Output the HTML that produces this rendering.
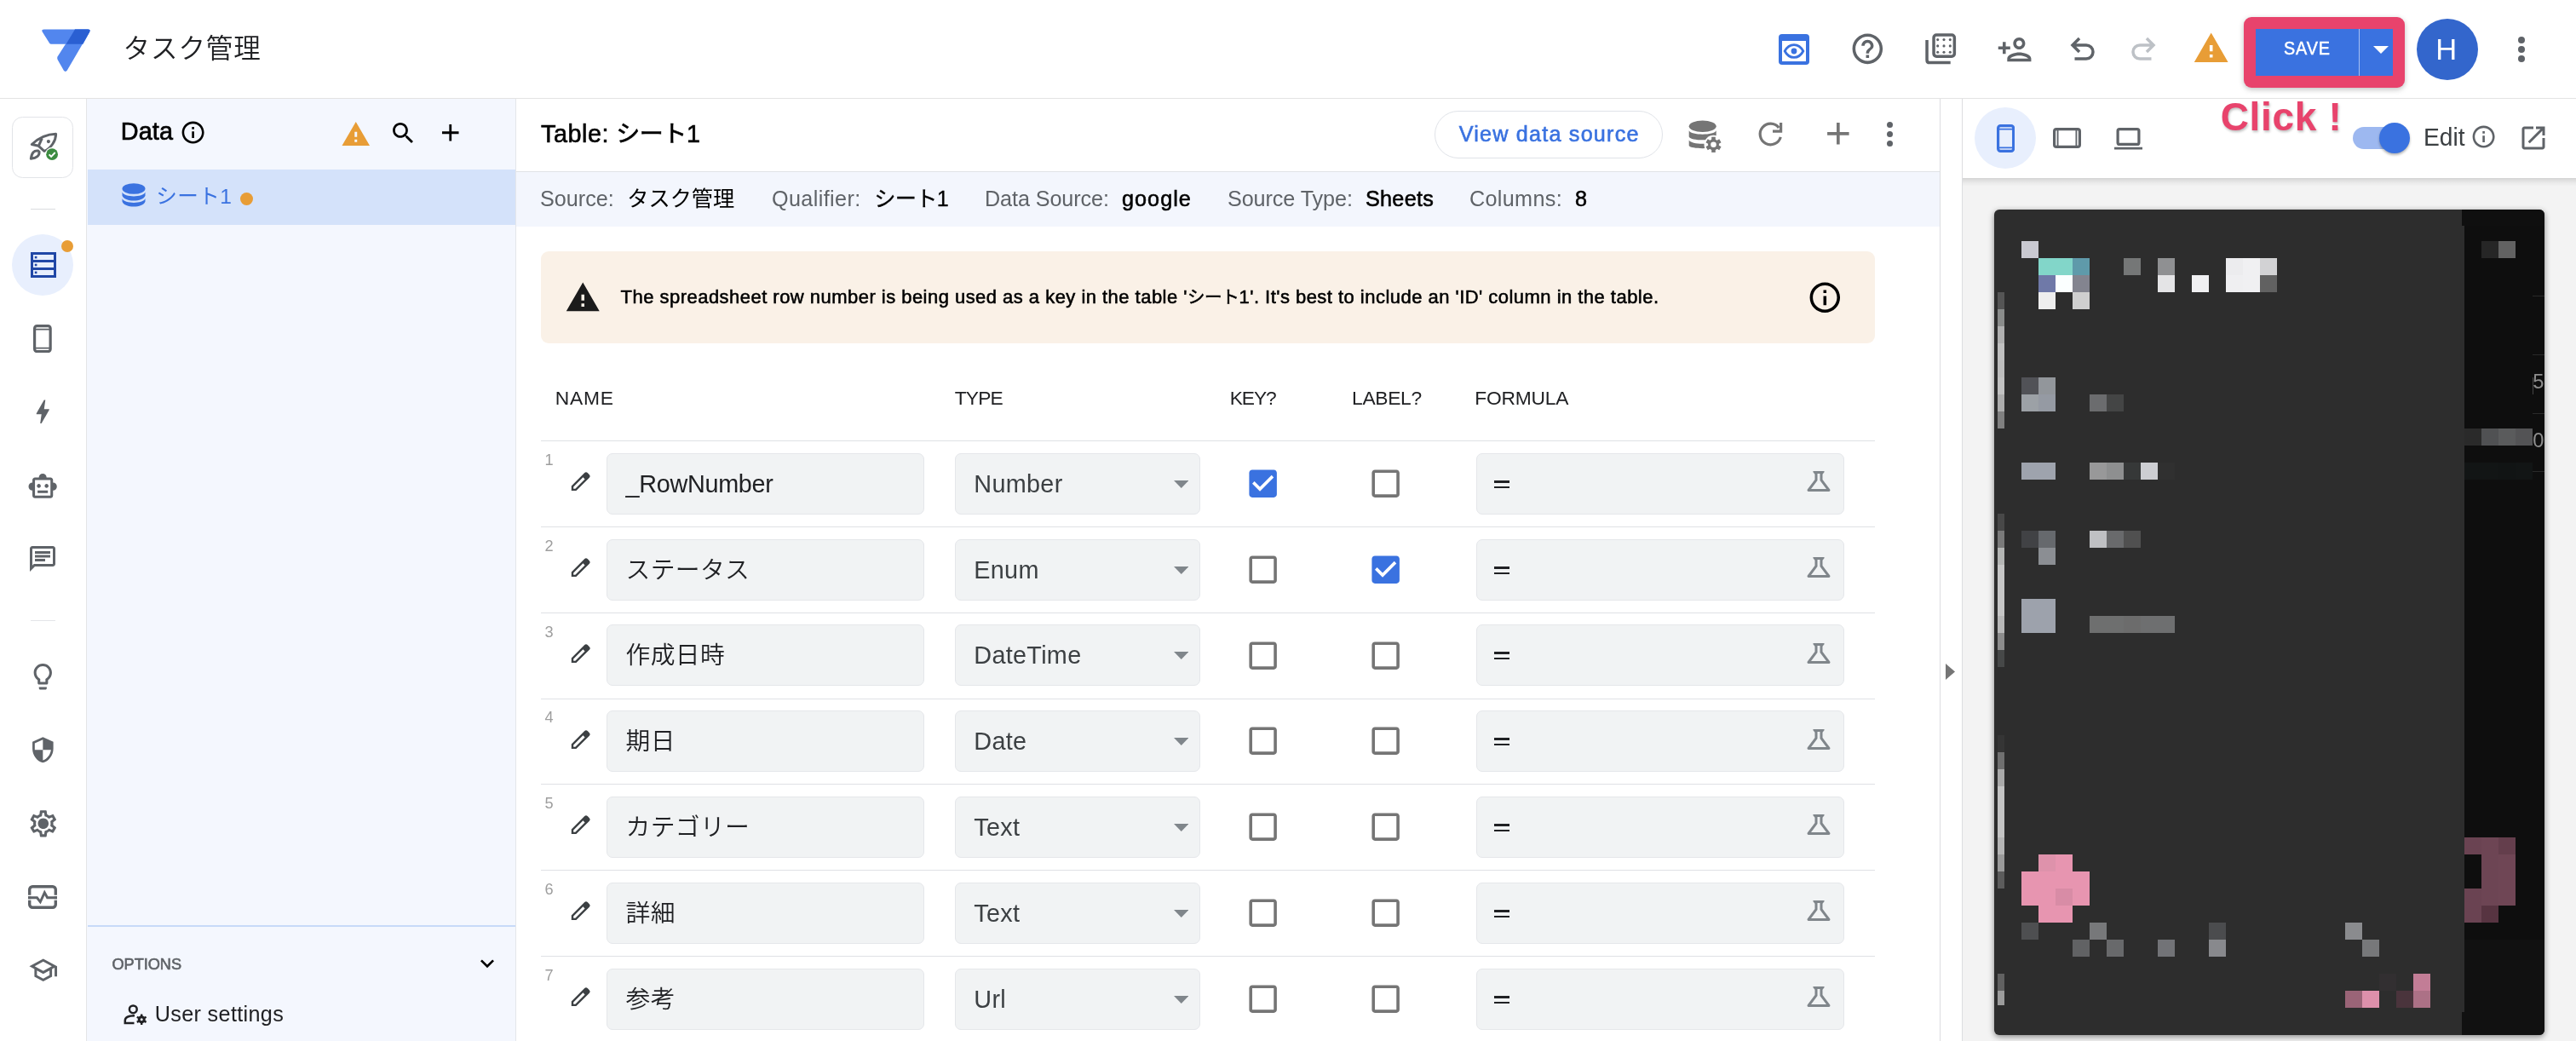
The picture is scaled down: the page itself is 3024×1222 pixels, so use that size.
<!DOCTYPE html>
<html lang="ja"><head><meta charset="utf-8"><title>タスク管理 - AppSheet</title>
<style>
html,body{margin:0;padding:0;}
body{width:3024px;height:1222px;overflow:hidden;position:relative;background:#fff;
 font-family:"Liberation Sans","Noto Sans CJK JP",sans-serif;}
#app{position:absolute;left:0;top:0;width:3024px;height:1222px;overflow:hidden;will-change:transform;}
#app>div,#app>svg,#app>span{position:absolute;box-sizing:border-box;}
.t{white-space:nowrap;display:block;}
</style></head>
<body><div id="app">
<div style="left:0px;top:0px;width:3024px;height:115px;background:#fff;"></div>
<div style="left:0px;top:115px;width:3024px;height:1px;background:#e3e3e3;"></div>
<div style="left:0px;top:116px;width:101px;height:1106px;background:#fff;"></div>
<div style="left:101px;top:116px;width:1px;height:1106px;background:#e4e5e7;"></div>
<div style="left:102px;top:116px;width:503px;height:1106px;background:#f4f7fe;"></div>
<div style="left:605px;top:116px;width:1px;height:1106px;background:#e4e6ea;"></div>
<div style="left:606px;top:116px;width:1671px;height:1106px;background:#fff;"></div>
<div style="left:2277px;top:116px;width:1px;height:1106px;background:#dcdde0;"></div>
<div style="left:2278px;top:116px;width:25px;height:1106px;background:#fff;"></div>
<div style="left:2303px;top:116px;width:1px;height:1106px;background:#dcdde0;"></div>
<div style="left:2304px;top:116px;width:720px;height:1106px;background:#f3f3f3;"></div>
<svg style="left:40px;top:26px;" width="76" height="66" viewBox="0 0 76 66"><path fill="#5286ee" d="M12 8.500 H63 Q66.800 8.500 65 11.800 L57.500 25.800 H20.300 Q18.600 25.800 17.800 24.300 L9.800 11.500 Q8 8.500 12 8.500Z"/><path fill="#5286ee" d="M48 8.500 H63 Q66.800 8.500 65 11.800 L39 56.300 Q36.800 59.500 34.600 56.300 L27.600 44 Q26.600 42 27.700 40.200Z"/><path fill="#2a5fd2" d="M48 8.500 H63 Q66.800 8.500 65 11.800 L57 25.800 H37.600Z"/></svg>
<span id="title" class="t" style="left:144.4px;top:42.45px;font-size:31.6px;line-height:31.6px;color:#202124;letter-spacing:0.9px;font-weight:350;">タスク管理</span>
<svg style="left:2088px;top:40px;" width="36" height="36" viewBox="0 0 36 36"><rect x="0" y="0" width="36" height="36" rx="4" fill="#3a72e0"/><rect x="4" y="8" width="28" height="24" fill="#fff"/><path d="M7.2 20 C10.2 14.2 14 12.6 18 12.6 S25.8 14.2 28.800 20 C25.800 25.800 22 27.400 18 27.400 S10.200 25.800 7.200 20Z" fill="none" stroke="#3a72e0" stroke-width="2.8"/><circle cx="18" cy="20" r="3.4" fill="#3a72e0"/></svg>
<svg style="left:2171.4px;top:35.9px;" width="42.7" height="42.7" viewBox="0 0 24 24"><path fill="#5f6368" d="M11 18h2v-2h-2v2zm1-16C6.48 2 2 6.48 2 12s4.48 10 10 10 10-4.48 10-10S17.52 2 12 2zm0 18c-4.41 0-8-3.59-8-8s3.59-8 8-8 8 3.59 8 8-3.59 8-8 8zm0-14c-2.21 0-4 1.79-4 4h2c0-1.1.9-2 2-2s2 .9 2 2c0 2-3 1.75-3 5h2c0-2.25 3-2.5 3-5 0-2.21-1.79-4-4-4z"/></svg>
<svg style="left:2258px;top:37px;" width="40" height="40" viewBox="0 0 40 40"><rect x="12.050" y="3.950" width="24.300" height="25.300" rx="3.200" fill="none" stroke="#5f6368" stroke-width="3.500"/><path d="M4.050 9.900 V33.400 Q4.050 36.600 7.250 36.600 H31.700" fill="none" stroke="#5f6368" stroke-width="3.500"/><circle cx="16.70" cy="9.60" r="1.550" fill="#5f6368"/><circle cx="16.70" cy="16.90" r="1.550" fill="#5f6368"/><circle cx="16.70" cy="24.20" r="1.550" fill="#5f6368"/><circle cx="24.00" cy="9.60" r="1.550" fill="#5f6368"/><circle cx="24.00" cy="16.90" r="1.550" fill="#5f6368"/><circle cx="24.00" cy="24.20" r="1.550" fill="#5f6368"/><circle cx="31.30" cy="9.60" r="1.550" fill="#5f6368"/><circle cx="31.30" cy="16.90" r="1.550" fill="#5f6368"/><circle cx="31.30" cy="24.20" r="1.550" fill="#5f6368"/></svg>
<svg style="left:2343.7px;top:36.5px;" width="42.2" height="42.2" viewBox="0 0 24 24"><path fill="#5f6368" d="M15 12c2.21 0 4-1.79 4-4s-1.79-4-4-4-4 1.79-4 4 1.79 4 4 4zm0-6c1.1 0 2 .9 2 2s-.9 2-2 2-2-.9-2-2 .9-2 2-2zm0 8c-2.67 0-8 1.34-8 4v2h16v-2c0-2.66-5.33-4-8-4zm-6 4c.22-.72 3.31-2 6-2 2.7 0 5.8 1.29 6 2H9zm-3-3v-3h3v-2H6V7H4v3H1v2h3v3z"/></svg>
<svg style="left:2429px;top:42.5px;" width="32" height="30" viewBox="0 0 32 30"><path d="M12 2 L4 10 L12 18 M4 10 H20 A8 8 0 0 1 20 26 H6.500" fill="none" stroke="#5f6368" stroke-width="3.500" stroke-linejoin="miter"/></svg>
<svg style="left:2499.75px;top:42.5px;" width="32" height="30" viewBox="0 0 32 30"><g transform="translate(32 0) scale(-1 1)"><path d="M12 2 L4 10 L12 18 M4 10 H20 A8 8 0 0 1 20 26 H6.500" fill="none" stroke="#bdc1c6" stroke-width="3.500"/></g></svg>
<svg style="left:2573.9px;top:35.4px;" width="43.4" height="43.4" viewBox="0 0 24 24"><path fill="#e89d36" d="M1 21h22L12 2 1 21zm12-3h-2v-2h2v2zm0-4h-2v-4h2v4z"/></svg>
<div style="left:2634px;top:20px;width:189px;height:83px;background:#e8436c;border-radius:9px;box-shadow:0 2px 6px rgba(0,0,0,.25);"></div>
<div style="left:2648px;top:34px;width:161px;height:55px;background:#3a72e0;"></div>
<div style="left:2769px;top:34px;width:1px;height:55px;background:rgba(255,255,255,.55);"></div>
<span id="save" class="t" style="left:2680.6px;top:46.47px;font-size:22.6px;line-height:22.6px;color:#fff;letter-spacing:1.0px;-webkit-text-stroke:0.5px #fff;transform:scaleX(0.876);transform-origin:0 0;">SAVE</span>
<svg style="left:2785.5px;top:53.5px;" width="18" height="9" viewBox="0 0 18 9"><path d="M0 0H18L9 9Z" fill="#fff"/></svg>
<div style="left:2837px;top:22px;width:72px;height:72px;background:#3366cc;border-radius:50%;"></div>
<span id="avatar" class="t" style="left:2859.3px;top:40.50px;font-size:34.5px;line-height:34.5px;color:#fff;">H</span>
<div style="left:2955.5px;top:43px;width:8px;height:8px;background:#5f6368;border-radius:50%;"></div>
<div style="left:2955.5px;top:54px;width:8px;height:8px;background:#5f6368;border-radius:50%;"></div>
<div style="left:2955.5px;top:65px;width:8px;height:8px;background:#5f6368;border-radius:50%;"></div>
<span id="click" class="t" style="left:2606.7px;top:113.56px;font-size:46px;line-height:46px;color:#e8436c;letter-spacing:0.7px;font-weight:700;text-shadow:1px 2px 3px rgba(0,0,0,.25);z-index:5;">Click !</span>
<div style="left:14px;top:137px;width:72px;height:72px;background:#fff;border:1px solid #e2e4e8;border-radius:12.500px;"></div>
<svg style="left:30px;top:150px;" width="44" height="42" viewBox="0 0 44 42"><path d="M35.600 7.300 C27 7.500 17 10.500 7.300 19.500 L15.300 21.300 L22 27.500 C30.500 23.500 35.600 15 35.600 7.300Z M19.300 12.300 L15.300 21.300" fill="none" stroke="#5f6368" stroke-width="3" stroke-linejoin="round"/><circle cx="26.900" cy="16.100" r="2.100" fill="#5f6368"/><path d="M14.800 27 C10 26.200 7.200 29.500 6.300 36.300 C13 35.500 16.600 32.800 16 28" fill="none" stroke="#5f6368" stroke-width="3" stroke-linejoin="round" stroke-linecap="round"/><circle cx="31.100" cy="31.200" r="8.200" fill="#fff"/><circle cx="31.100" cy="31.200" r="6.900" fill="#3c8c40"/><path d="M27.600 31.400 L30.100 33.800 L34.700 29" fill="none" stroke="#fff" stroke-width="1.900"/></svg>
<div style="left:36px;top:245px;width:29px;height:1px;background:#dadce0;"></div>
<div style="left:36px;top:728px;width:29px;height:1px;background:#e3e5e8;"></div>
<div style="left:14px;top:275px;width:72px;height:72px;background:#e8effd;border-radius:50%;"></div>
<svg style="left:36px;top:296px;" width="30" height="30" viewBox="0 0 30 30"><rect x="1.500" y="1.500" width="27" height="27" fill="none" stroke="#2047a6" stroke-width="3"/><path d="M1.500 10.500H28.500M1.500 19.500H28.500" stroke="#2047a6" stroke-width="3"/><rect x="4.800" y="4.800" width="2.600" height="2.600" fill="#2047a6"/><rect x="4.800" y="13.700" width="2.600" height="2.600" fill="#2047a6"/><rect x="4.800" y="22.600" width="2.600" height="2.600" fill="#2047a6"/></svg>
<div style="left:72px;top:282px;width:14px;height:14px;background:#e89d36;border-radius:50%;"></div>
<svg style="left:39px;top:380.5px;" width="21.75" height="33.25" viewBox="0 0 21.75 33.25"><rect x="1.600" y="1.600" width="18.55" height="30.05" rx="2.800" fill="none" stroke="#5f6368" stroke-width="3.200"/><path d="M2 5.700H19.75M2 27.55H19.75" stroke="#5f6368" stroke-width="1.800"/></svg>
<svg style="left:31.86px;top:464.7px;" width="36.5" height="36.5" viewBox="0 0 24 24"><path fill="#5f6368" d="M11 21h-1l1-7H7.5c-.58 0-.57-.32-.38-.66.19-.34.05-.08.07-.12C8.48 10.94 10.42 7.54 13 3h1l-1 7h3.5c.49 0 .56.33.47.51l-.07.15C12.96 17.55 11 21 11 21z"/></svg>
<svg style="left:32.3px;top:552.6px;" width="36.3" height="36.3" viewBox="0 0 24 24"><path fill="#5f6368" d="M20 9V7c0-1.100-.9-2-2-2h-3c0-1.660-1.340-3-3-3S9 3.340 9 5H6c-1.100 0-2 .9-2 2v2c-1.660 0-3 1.340-3 3s1.340 3 3 3v4c0 1.100.9 2 2 2h12c1.100 0 2-.9 2-2v-4c1.660 0 3-1.340 3-3s-1.340-3-3-3zm-2 10H6V7h12v12zm-9-6c-.83 0-1.500-.67-1.500-1.500S8.170 10 9 10s1.500.67 1.500 1.500S9.830 13 9 13zm7.500-1.500c0 .83-.67 1.500-1.500 1.500s-1.500-.67-1.500-1.500.67-1.500 1.500-1.500 1.500.67 1.500 1.500zM8 15h8v2H8v-2z"/></svg>
<svg style="left:32px;top:637.7px;" width="36" height="36" viewBox="0 0 24 24"><path fill="#5f6368" d="M4 4h16v12H5.170L4 17.170V4m0-2c-1.100 0-1.990.9-1.990 2L2 22l4-4h14c1.100 0 2-.9 2-2V4c0-1.100-.9-2-2-2H4zm2 10h8v2H6v-2zm0-3h12v2H6V9zm0-3h12v2H6V6z"/></svg>
<svg style="left:32.4px;top:775.7px;" width="36.6" height="36.6" viewBox="0 0 24 24"><path fill="#5f6368" d="M9 21c0 .55.45 1 1 1h4c.55 0 1-.45 1-1v-1H9v1zm3-19C8.140 2 5 5.140 5 9c0 2.380 1.190 4.470 3 5.740V17c0 .55.45 1 1 1h6c.55 0 1-.45 1-1v-2.260c1.810-1.270 3-3.360 3-5.740 0-3.860-3.140-7-7-7zm2.850 11.100l-.85.6V16h-4v-2.300l-.85-.6C7.800 12.160 7 10.630 7 9c0-2.760 2.240-5 5-5s5 2.240 5 5c0 1.630-.8 3.160-2.150 4.100z"/></svg>
<svg style="left:34.03px;top:863.6px;" width="32.7" height="32.7" viewBox="0 0 24 24"><path fill="#5f6368" d="M12 1L3 5v6c0 5.550 3.840 10.740 9 12 5.160-1.260 9-6.450 9-12V5l-9-4zm0 10.990h7c-.53 4.120-3.280 7.790-7 8.940V12H5V6.300l7-3.110v8.800z"/></svg>
<svg style="left:31.8px;top:948.1px;" width="37.6" height="37.6" viewBox="0 0 24 24"><path fill="#5f6368" d="M19.430 12.980c.04-.32.070-.64.070-.98 0-.34-.03-.66-.07-.98l2.110-1.650c.19-.15.24-.42.12-.64l-2-3.460c-.09-.16-.26-.25-.44-.25-.06 0-.12.010-.17.030l-2.490 1c-.52-.4-1.080-.73-1.690-.98l-.38-2.650C14.460 2.180 14.250 2 14 2h-4c-.25 0-.46.180-.49.420l-.38 2.650c-.61.25-1.170.59-1.690.98l-2.490-1c-.06-.02-.12-.03-.18-.03-.17 0-.34.090-.43.250l-2 3.460c-.13.220-.07.490.12.640l2.110 1.650c-.04.320-.07.650-.07.980 0 .33.030.66.070.98l-2.110 1.650c-.19.150-.24.420-.12.640l2 3.460c.09.160.26.250.44.250.06 0 .12-.010.17-.03l2.490-1c.52.4 1.080.73 1.690.98l.38 2.650c.03.240.24.420.49.420h4c.25 0 .46-.18.490-.42l.38-2.650c.61-.25 1.170-.59 1.690-.98l2.490 1c.06.020.12.030.18.030.17 0 .34-.09.43-.25l2-3.460c.12-.22.070-.49-.12-.64l-2.110-1.650zm-1.980-1.710c.04.310.05.520.05.730 0 .21-.02.430-.05.730l-.14 1.130.89.7 1.080.84-.7 1.210-1.270-.51-1.040-.42-.9.68c-.43.320-.84.560-1.250.73l-1.060.43-.16 1.130-.2 1.350h-1.400l-.19-1.350-.16-1.130-1.060-.43c-.43-.18-.83-.41-1.230-.71l-.91-.7-1.060.43-1.270.51-.7-1.210 1.080-.84.89-.7-.14-1.130c-.03-.31-.05-.54-.05-.74s.02-.43.050-.73l.14-1.130-.89-.7-1.080-.84.7-1.210 1.270.51 1.040.42.9-.68c.43-.32.840-.56 1.250-.73l1.060-.43.16-1.130.2-1.350h1.390l.19 1.350.16 1.130 1.060.43c.43.18.83.41 1.230.71l.91.7 1.060-.43 1.270-.51.7 1.210-1.070.85-.89.7.14 1.130zM12 8c-2.210 0-4 1.790-4 4s1.790 4 4 4 4-1.790 4-4-1.790-4-4-4z"/></svg>
<svg style="left:32px;top:1038px;" width="36" height="30" viewBox="0 0 36 30"><rect x="2.700" y="2.700" width="30.600" height="24.600" rx="3.500" fill="none" stroke="#5f6368" stroke-width="3.400"/><path d="M0.500 13.600H5M0.500 18H5M31 13.600H35.500M31 18H35.500" stroke="#fff" stroke-width="1.500"/><path d="M1 15.800 H11.500 L15.300 20.800 L20.300 9.800 L23.600 15.800 H35" fill="none" stroke="#5f6368" stroke-width="2.900"/></svg>
<svg style="left:32.7px;top:1120.6px;" width="35.5" height="35.5" viewBox="0 0 24 24"><path fill="#5f6368" d="M12 3L1 9l4 2.180v6L12 21l7-3.820v-6l2-1.090V17h2V9L12 3zm6.820 6L12 12.720 5.180 9 12 5.280 18.820 9zM17 15.990l-5 2.730-5-2.730v-3.720L12 15l5-2.730v3.720z"/></svg>
<span id="data" class="t" style="left:141.7px;top:139.52px;font-size:28.8px;line-height:28.8px;color:#000;letter-spacing:0.15px;-webkit-text-stroke:0.7px #000;">Data</span>
<svg style="left:210.9px;top:139.7px;" width="31.2" height="31.2" viewBox="0 0 24 24"><path fill="#000" d="M11 7h2v2h-2zm0 4h2v6h-2zm1-9C6.48 2 2 6.48 2 12s4.48 10 10 10 10-4.48 10-10S17.52 2 12 2zm0 18c-4.41 0-8-3.59-8-8s3.59-8 8-8 8 3.59 8 8-3.59 8-8 8z"/></svg>
<svg style="left:400px;top:140.1px;" width="35.5" height="35.5" viewBox="0 0 24 24"><path fill="#e89d36" d="M1 21h22L12 2 1 21zm12-3h-2v-2h2v2zm0-4h-2v-4h2v4z"/></svg>
<svg style="left:456.9px;top:140.2px;" width="32.8" height="32.8" viewBox="0 0 24 24"><path fill="#000" d="M15.5 14h-.79l-.28-.27C15.41 12.59 16 11.11 16 9.5 16 5.91 13.09 3 9.5 3S3 5.91 3 9.5 5.91 16 9.5 16c1.61 0 3.09-.59 4.23-1.57l.27.28v.79l5 4.99L20.49 19l-4.99-5zm-6 0C7.01 14 5 11.99 5 9.5S7.01 5 9.5 5 14 7.01 14 9.5 11.99 14 9.5 14z"/></svg>
<svg style="left:512.1px;top:139.4px;" width="33.5" height="33.5" viewBox="0 0 24 24"><path fill="#000" d="M19 13h-6v6h-2v-6H5v-2h6V5h2v6h6v2z"/></svg>
<div style="left:103px;top:199px;width:502px;height:65px;background:#d4e2fa;"></div>
<svg style="left:143px;top:215px;" width="28" height="28" viewBox="0 0 28 28"><ellipse cx="14" cy="6.500" rx="13.500" ry="6.300" fill="#3a72e0"/><path d="M0.500 10.500 C3 17 25 17 27.500 10.500 V14.800 C25 22.500 3 22.500 0.500 14.800Z" fill="#3a72e0"/><path d="M0.500 18 C3 24.500 25 24.500 27.500 18 V21.500 C25 29.500 3 29.500 0.500 21.500Z" fill="#3a72e0"/></svg>
<span id="sheet1" class="t" style="left:183.3px;top:218.98px;font-size:24.6px;line-height:24.6px;color:#3a72e0;letter-spacing:0.4px;">シート1</span>
<div style="left:281.5px;top:225.5px;width:15.5px;height:15.5px;background:#e89d36;border-radius:50%;"></div>
<div style="left:103px;top:1086px;width:502px;height:2px;background:#c7daf8;"></div>
<span id="options" class="t" style="left:131.5px;top:1123.19px;font-size:18.2px;line-height:18.2px;color:#5f6368;letter-spacing:-0.05px;-webkit-text-stroke:0.6px #5f6368;">OPTIONS</span>
<svg style="left:556.3px;top:1115.35px;" width="32" height="32" viewBox="0 0 24 24"><path fill="#000" d="M16.59 8.59L12 13.17 7.41 8.59 6 10l6 6 6-6z"/></svg>
<svg style="left:145px;top:1178px;" width="29" height="25" viewBox="0 0 29 25"><circle cx="11.300" cy="6.800" r="4.400" fill="none" stroke="#202124" stroke-width="2.500"/><path d="M13 14.200 C6 14.200 1.800 16.500 1.800 20 V23 H12.500" fill="none" stroke="#202124" stroke-width="2.500"/><circle cx="21.200" cy="18.800" r="3.200" fill="none" stroke="#202124" stroke-width="2.600"/><path d="M21.200 12.600V25M15.800 15.700L26.600 21.900M15.800 21.900L26.600 15.700" stroke="#202124" stroke-width="2.400"/><circle cx="21.200" cy="18.800" r="1.500" fill="#f4f7fe"/></svg>
<span id="usersettings" class="t" style="left:181.8px;top:1177.67px;font-size:25.2px;line-height:25.2px;color:#202124;letter-spacing:0.33px;">User settings</span>
<span id="tabletitle" class="t" style="left:635px;top:142.62px;font-size:28.8px;line-height:28.8px;color:#000;-webkit-text-stroke:0.6px #000;"><span style="letter-spacing:.55px">Table:</span> <span style="font-size:28px;letter-spacing:-.4px">シート</span>1</span>
<div style="left:1684px;top:130px;width:268px;height:56px;background:#fff;border:1px solid #e0e3e8;border-radius:28px;"></div>
<span id="viewds" class="t" style="left:1712.7px;top:144.92px;font-size:25.2px;line-height:25.2px;color:#3a72e0;letter-spacing:1.2px;-webkit-text-stroke:0.6px #3a72e0;">View data source</span>
<svg style="left:1980px;top:140px;" width="44" height="42" viewBox="0 0 44 42"><ellipse cx="18.700" cy="8.200" rx="16" ry="6.700" fill="#757575"/><path d="M2.700 13.200 C5 19.100 32.400 19.100 34.700 13.200 V20.400 C32.400 25.600 5 25.600 2.700 20.400Z" fill="#757575"/><path d="M2.700 24.500 C5 30.200 32.400 30.200 34.700 24.500 V31 C32.400 35.200 5 35.200 2.700 31Z" fill="#757575"/><g transform="translate(31.500 29.800)"><circle r="11" fill="#fff"/><circle r="6.500" fill="#757575"/><rect x="-2.300" y="-9.100" width="4.600" height="5" fill="#757575" transform="rotate(0)"/><rect x="-2.300" y="-9.100" width="4.600" height="5" fill="#757575" transform="rotate(60)"/><rect x="-2.300" y="-9.100" width="4.600" height="5" fill="#757575" transform="rotate(120)"/><rect x="-2.300" y="-9.100" width="4.600" height="5" fill="#757575" transform="rotate(180)"/><rect x="-2.300" y="-9.100" width="4.600" height="5" fill="#757575" transform="rotate(240)"/><rect x="-2.300" y="-9.100" width="4.600" height="5" fill="#757575" transform="rotate(300)"/><circle r="3.300" fill="#fff"/></g></svg>
<svg style="left:2060px;top:140px;" width="36" height="36" viewBox="0 0 36 36"><path d="M28.200 9.900 A12.300 12.300 0 1 0 30.300 20.900" fill="none" stroke="#757575" stroke-width="3.200"/><path d="M30.600 3.900 V14.100 H21" fill="none" stroke="#757575" stroke-width="3.200"/></svg>
<svg style="left:2135.8px;top:135.4px;" width="43.7" height="43.7" viewBox="0 0 24 24"><path fill="#757575" d="M19 13h-6v6h-2v-6H5v-2h6V5h2v6h6v2z"/></svg>
<div style="left:2214.9px;top:143.20000000000002px;width:7.2px;height:7.2px;background:#5f6368;border-radius:50%;"></div>
<div style="left:2214.9px;top:153.9px;width:7.2px;height:7.2px;background:#5f6368;border-radius:50%;"></div>
<div style="left:2214.9px;top:164.70000000000002px;width:7.2px;height:7.2px;background:#5f6368;border-radius:50%;"></div>
<div style="left:606px;top:201px;width:1671px;height:1px;background:#e0e2e6;"></div>
<div style="left:606px;top:202px;width:1671px;height:63.5px;background:#f3f6fd;"></div>
<span id="i_src_l" class="t" style="left:634px;top:220.28px;font-size:26.6px;line-height:26.6px;color:#5f6368;transform:scaleX(0.947);transform-origin:0 0;">Source:</span>
<span id="i_src_v" class="t" style="left:736.3px;top:220.67px;font-size:25.2px;line-height:25.2px;color:#000;">タスク管理</span>
<span id="i_q_l" class="t" style="left:906px;top:220.28px;font-size:26.6px;line-height:26.6px;color:#5f6368;letter-spacing:0.4px;transform:scaleX(0.947);transform-origin:0 0;">Qualifier:</span>
<span id="i_q_v" class="t" style="left:1026.2px;top:220.67px;font-size:25.2px;line-height:25.2px;color:#000;letter-spacing:-0.7px;-webkit-text-stroke:0.3px #000;">シート1</span>
<span id="i_ds_l" class="t" style="left:1156px;top:220.28px;font-size:26.6px;line-height:26.6px;color:#5f6368;letter-spacing:-0.1px;transform:scaleX(0.947);transform-origin:0 0;">Data Source:</span>
<span id="i_ds_v" class="t" style="left:1316.7px;top:220.28px;font-size:26.6px;line-height:26.6px;color:#000;letter-spacing:1.1px;-webkit-text-stroke:0.6px #000;transform:scaleX(0.947);transform-origin:0 0;">google</span>
<span id="i_st_l" class="t" style="left:1441px;top:220.28px;font-size:26.6px;line-height:26.6px;color:#5f6368;letter-spacing:-0.1px;transform:scaleX(0.947);transform-origin:0 0;">Source Type:</span>
<span id="i_st_v" class="t" style="left:1603px;top:220.28px;font-size:26.6px;line-height:26.6px;color:#000;letter-spacing:0.3px;-webkit-text-stroke:0.6px #000;transform:scaleX(0.947);transform-origin:0 0;">Sheets</span>
<span id="i_c_l" class="t" style="left:1725px;top:220.28px;font-size:26.6px;line-height:26.6px;color:#5f6368;letter-spacing:0.35px;transform:scaleX(0.947);transform-origin:0 0;">Columns:</span>
<span id="i_c_v" class="t" style="left:1848.5px;top:220.28px;font-size:26.6px;line-height:26.6px;color:#000;-webkit-text-stroke:0.6px #000;transform:scaleX(0.947);transform-origin:0 0;">8</span>
<div style="left:635px;top:295px;width:1566px;height:108px;background:#faf1e7;border-radius:9px;"></div>
<svg style="left:663.2px;top:328.2px;" width="42.5" height="42.5" viewBox="0 0 24 24"><path fill="#1b1b1b" d="M1 21h22L12 2 1 21zm12-3h-2v-2h2v2zm0-4h-2v-4h2v4z"/></svg>
<span id="warn" class="t" style="left:728.6px;top:338.38px;font-size:22px;line-height:22px;color:#000;letter-spacing:0.47px;-webkit-text-stroke:0.55px #000;">The spreadsheet row number is being used as a key in the table '<span style="font-size:20.500px;letter-spacing:-.3px">シート</span>1'. It's best to include an 'ID' column in the table.</span>
<svg style="left:2121.45px;top:328.15px;" width="42.6" height="42.6" viewBox="0 0 24 24"><path fill="#000" d="M11 7h2v2h-2zm0 4h2v6h-2zm1-9C6.48 2 2 6.48 2 12s4.48 10 10 10 10-4.48 10-10S17.52 2 12 2zm0 18c-4.41 0-8-3.59-8-8s3.59-8 8-8 8 3.59 8 8-3.59 8-8 8z"/></svg>
<span id="h_name" class="t" style="left:651.8px;top:455.70px;font-size:22.8px;line-height:22.8px;color:#202124;letter-spacing:0.8px;">NAME</span>
<span id="h_type" class="t" style="left:1120.7px;top:455.70px;font-size:22.8px;line-height:22.8px;color:#202124;letter-spacing:-0.8px;">TYPE</span>
<span id="h_key" class="t" style="left:1443.7px;top:455.70px;font-size:22.8px;line-height:22.8px;color:#202124;letter-spacing:-1.1px;">KEY?</span>
<span id="h_label" class="t" style="left:1587px;top:455.70px;font-size:22.8px;line-height:22.8px;color:#202124;letter-spacing:-0.3px;">LABEL?</span>
<span id="h_formula" class="t" style="left:1731.2px;top:455.70px;font-size:22.8px;line-height:22.8px;color:#202124;letter-spacing:-0.2px;">FORMULA</span>
<div style="left:635px;top:517px;width:1566px;height:1px;background:#dfe1e5;"></div>
<span id="n0" class="t" style="left:639.5px;top:530.99px;font-size:18.2px;line-height:18.2px;color:#9e9e9e;">1</span>
<svg style="left:670px;top:553.2px;" width="25" height="25" viewBox="0 0 25 25"><g transform="translate(0.800 23.100) rotate(-45)"><path fill-rule="evenodd" fill="#3c4043" d="M0 0 L4 -4 H25.800 Q28.300 -4 28.300 -1.500 V1.500 Q28.300 4 25.800 4 H4 Z M3.400 0 L4.900 1.500 H20.800 V-1.500 H4.900 Z"/></g></svg>
<div style="left:712px;top:532px;width:373px;height:72px;background:#f1f3f4;border:1px solid #e5e7ea;border-radius:7px;"></div>
<span id="name0" class="t" style="left:734.5px;top:553.82px;font-size:28.8px;line-height:28.8px;color:#202124;letter-spacing:-0.3px;">_RowNumber</span>
<div style="left:1121px;top:532px;width:288px;height:72px;background:#f1f3f4;border:1px solid #e5e7ea;border-radius:7px;"></div>
<span id="type0" class="t" style="left:1143.3px;top:553.82px;font-size:28.8px;line-height:28.8px;color:#3c4043;letter-spacing:0.3px;">Number</span>
<svg style="left:1377.75px;top:563.8000000000001px;" width="17.5" height="9" viewBox="0 0 17.500 9"><path d="M0 0H17.500L8.750 9Z" fill="#80868b"/></svg>
<svg style="left:1461.1px;top:546.0px;" width="43.3" height="43.3" viewBox="0 0 24 24"><path fill="#3a72e0" d="M19 3H5c-1.11 0-2 .9-2 2v14c0 1.1.89 2 2 2h14c1.11 0 2-.9 2-2V5c0-1.1-.89-2-2-2zm-9 14l-5-5 1.41-1.41L10 14.17l7.59-7.59L19 8l-9 9z"/></svg>
<svg style="left:1604.85px;top:546.0px;" width="43.3" height="43.3" viewBox="0 0 24 24"><path fill="#757575" d="M19 5v14H5V5h14m0-2H5c-1.1 0-2 .9-2 2v14c0 1.1.9 2 2 2h14c1.1 0 2-.9 2-2V5c0-1.1-.9-2-2-2z"/></svg>
<div style="left:1733px;top:532px;width:432px;height:72px;background:#f1f3f4;border:1px solid #e5e7ea;border-radius:7px;"></div>
<div style="left:1754px;top:564px;width:17.5px;height:2.7px;background:#202124;"></div>
<div style="left:1754px;top:570.6px;width:17.5px;height:2.7px;background:#202124;"></div>
<svg style="left:2117.25px;top:547.2px;" width="36" height="36" viewBox="0 0 24 24"><path fill="#80868b" d="M13 11.330L18 18H6l5-6.670V6h2m2.960-2H8.040c-.42 0-.65.48-.39.81L9 6.500v4.170L3.200 18.400c-.49.66-.02 1.600.8 1.600h16c.82 0 1.290-.94.8-1.600L15 10.670V6.500l1.350-1.690c.26-.33.030-.81-.39-.81z"/></svg>
<div style="left:635px;top:618px;width:1566px;height:1px;background:#dfe1e5;"></div>
<span id="n1" class="t" style="left:639.5px;top:631.79px;font-size:18.2px;line-height:18.2px;color:#9e9e9e;">2</span>
<svg style="left:670px;top:654.0px;" width="25" height="25" viewBox="0 0 25 25"><g transform="translate(0.800 23.100) rotate(-45)"><path fill-rule="evenodd" fill="#3c4043" d="M0 0 L4 -4 H25.800 Q28.300 -4 28.300 -1.500 V1.500 Q28.300 4 25.800 4 H4 Z M3.400 0 L4.900 1.500 H20.800 V-1.500 H4.900 Z"/></g></svg>
<div style="left:712px;top:633px;width:373px;height:72px;background:#f1f3f4;border:1px solid #e5e7ea;border-radius:7px;"></div>
<span id="name1" class="t" style="left:734.5px;top:654.62px;font-size:28.8px;line-height:28.8px;color:#202124;letter-spacing:0.35px;font-weight:350;">ステータス</span>
<div style="left:1121px;top:633px;width:288px;height:72px;background:#f1f3f4;border:1px solid #e5e7ea;border-radius:7px;"></div>
<span id="type1" class="t" style="left:1143.3px;top:654.62px;font-size:28.8px;line-height:28.8px;color:#3c4043;letter-spacing:0.3px;">Enum</span>
<svg style="left:1377.75px;top:664.6px;" width="17.5" height="9" viewBox="0 0 17.500 9"><path d="M0 0H17.500L8.750 9Z" fill="#80868b"/></svg>
<svg style="left:1461.1px;top:646.8px;" width="43.3" height="43.3" viewBox="0 0 24 24"><path fill="#757575" d="M19 5v14H5V5h14m0-2H5c-1.1 0-2 .9-2 2v14c0 1.1.9 2 2 2h14c1.1 0 2-.9 2-2V5c0-1.1-.9-2-2-2z"/></svg>
<svg style="left:1604.85px;top:646.8px;" width="43.3" height="43.3" viewBox="0 0 24 24"><path fill="#3a72e0" d="M19 3H5c-1.11 0-2 .9-2 2v14c0 1.1.89 2 2 2h14c1.11 0 2-.9 2-2V5c0-1.1-.89-2-2-2zm-9 14l-5-5 1.41-1.41L10 14.17l7.59-7.59L19 8l-9 9z"/></svg>
<div style="left:1733px;top:633px;width:432px;height:72px;background:#f1f3f4;border:1px solid #e5e7ea;border-radius:7px;"></div>
<div style="left:1754px;top:665px;width:17.5px;height:2.7px;background:#202124;"></div>
<div style="left:1754px;top:671.6px;width:17.5px;height:2.7px;background:#202124;"></div>
<svg style="left:2117.25px;top:648.0px;" width="36" height="36" viewBox="0 0 24 24"><path fill="#80868b" d="M13 11.330L18 18H6l5-6.670V6h2m2.960-2H8.040c-.42 0-.65.48-.39.81L9 6.500v4.170L3.200 18.400c-.49.66-.02 1.600.8 1.600h16c.82 0 1.290-.94.8-1.600L15 10.670V6.500l1.350-1.690c.26-.33.030-.81-.39-.81z"/></svg>
<div style="left:635px;top:719px;width:1566px;height:1px;background:#dfe1e5;"></div>
<span id="n2" class="t" style="left:639.5px;top:732.59px;font-size:18.2px;line-height:18.2px;color:#9e9e9e;">3</span>
<svg style="left:670px;top:754.8000000000001px;" width="25" height="25" viewBox="0 0 25 25"><g transform="translate(0.800 23.100) rotate(-45)"><path fill-rule="evenodd" fill="#3c4043" d="M0 0 L4 -4 H25.800 Q28.300 -4 28.300 -1.500 V1.500 Q28.300 4 25.800 4 H4 Z M3.400 0 L4.900 1.500 H20.800 V-1.500 H4.900 Z"/></g></svg>
<div style="left:712px;top:733px;width:373px;height:72px;background:#f1f3f4;border:1px solid #e5e7ea;border-radius:7px;"></div>
<span id="name2" class="t" style="left:734.5px;top:755.42px;font-size:28.8px;line-height:28.8px;color:#202124;letter-spacing:0.35px;font-weight:350;">作成日時</span>
<div style="left:1121px;top:733px;width:288px;height:72px;background:#f1f3f4;border:1px solid #e5e7ea;border-radius:7px;"></div>
<span id="type2" class="t" style="left:1143.3px;top:755.42px;font-size:28.8px;line-height:28.8px;color:#3c4043;letter-spacing:0.3px;">DateTime</span>
<svg style="left:1377.75px;top:765.4000000000001px;" width="17.5" height="9" viewBox="0 0 17.500 9"><path d="M0 0H17.500L8.750 9Z" fill="#80868b"/></svg>
<svg style="left:1461.1px;top:747.6px;" width="43.3" height="43.3" viewBox="0 0 24 24"><path fill="#757575" d="M19 5v14H5V5h14m0-2H5c-1.1 0-2 .9-2 2v14c0 1.1.9 2 2 2h14c1.1 0 2-.9 2-2V5c0-1.1-.9-2-2-2z"/></svg>
<svg style="left:1604.85px;top:747.6px;" width="43.3" height="43.3" viewBox="0 0 24 24"><path fill="#757575" d="M19 5v14H5V5h14m0-2H5c-1.1 0-2 .9-2 2v14c0 1.1.9 2 2 2h14c1.1 0 2-.9 2-2V5c0-1.1-.9-2-2-2z"/></svg>
<div style="left:1733px;top:733px;width:432px;height:72px;background:#f1f3f4;border:1px solid #e5e7ea;border-radius:7px;"></div>
<div style="left:1754px;top:765px;width:17.5px;height:2.7px;background:#202124;"></div>
<div style="left:1754px;top:771.6px;width:17.5px;height:2.7px;background:#202124;"></div>
<svg style="left:2117.25px;top:748.8000000000001px;" width="36" height="36" viewBox="0 0 24 24"><path fill="#80868b" d="M13 11.330L18 18H6l5-6.670V6h2m2.960-2H8.040c-.42 0-.65.48-.39.81L9 6.500v4.170L3.200 18.400c-.49.66-.02 1.600.8 1.600h16c.82 0 1.290-.94.8-1.600L15 10.670V6.500l1.350-1.690c.26-.33.030-.81-.39-.81z"/></svg>
<div style="left:635px;top:820px;width:1566px;height:1px;background:#dfe1e5;"></div>
<span id="n3" class="t" style="left:639.5px;top:833.39px;font-size:18.2px;line-height:18.2px;color:#9e9e9e;">4</span>
<svg style="left:670px;top:855.6px;" width="25" height="25" viewBox="0 0 25 25"><g transform="translate(0.800 23.100) rotate(-45)"><path fill-rule="evenodd" fill="#3c4043" d="M0 0 L4 -4 H25.800 Q28.300 -4 28.300 -1.500 V1.500 Q28.300 4 25.800 4 H4 Z M3.400 0 L4.900 1.500 H20.800 V-1.500 H4.900 Z"/></g></svg>
<div style="left:712px;top:834px;width:373px;height:72px;background:#f1f3f4;border:1px solid #e5e7ea;border-radius:7px;"></div>
<span id="name3" class="t" style="left:734.5px;top:856.22px;font-size:28.8px;line-height:28.8px;color:#202124;letter-spacing:0.35px;font-weight:350;">期日</span>
<div style="left:1121px;top:834px;width:288px;height:72px;background:#f1f3f4;border:1px solid #e5e7ea;border-radius:7px;"></div>
<span id="type3" class="t" style="left:1143.3px;top:856.22px;font-size:28.8px;line-height:28.8px;color:#3c4043;letter-spacing:0.3px;">Date</span>
<svg style="left:1377.75px;top:866.2px;" width="17.5" height="9" viewBox="0 0 17.500 9"><path d="M0 0H17.500L8.750 9Z" fill="#80868b"/></svg>
<svg style="left:1461.1px;top:848.4px;" width="43.3" height="43.3" viewBox="0 0 24 24"><path fill="#757575" d="M19 5v14H5V5h14m0-2H5c-1.1 0-2 .9-2 2v14c0 1.1.9 2 2 2h14c1.1 0 2-.9 2-2V5c0-1.1-.9-2-2-2z"/></svg>
<svg style="left:1604.85px;top:848.4px;" width="43.3" height="43.3" viewBox="0 0 24 24"><path fill="#757575" d="M19 5v14H5V5h14m0-2H5c-1.1 0-2 .9-2 2v14c0 1.1.9 2 2 2h14c1.1 0 2-.9 2-2V5c0-1.1-.9-2-2-2z"/></svg>
<div style="left:1733px;top:834px;width:432px;height:72px;background:#f1f3f4;border:1px solid #e5e7ea;border-radius:7px;"></div>
<div style="left:1754px;top:866px;width:17.5px;height:2.7px;background:#202124;"></div>
<div style="left:1754px;top:872.6px;width:17.5px;height:2.7px;background:#202124;"></div>
<svg style="left:2117.25px;top:849.6px;" width="36" height="36" viewBox="0 0 24 24"><path fill="#80868b" d="M13 11.330L18 18H6l5-6.670V6h2m2.960-2H8.040c-.42 0-.65.48-.39.81L9 6.500v4.170L3.200 18.400c-.49.66-.02 1.600.8 1.600h16c.82 0 1.290-.94.8-1.600L15 10.670V6.500l1.350-1.690c.26-.33.030-.81-.39-.81z"/></svg>
<div style="left:635px;top:920px;width:1566px;height:1px;background:#dfe1e5;"></div>
<span id="n4" class="t" style="left:639.5px;top:934.19px;font-size:18.2px;line-height:18.2px;color:#9e9e9e;">5</span>
<svg style="left:670px;top:956.4000000000001px;" width="25" height="25" viewBox="0 0 25 25"><g transform="translate(0.800 23.100) rotate(-45)"><path fill-rule="evenodd" fill="#3c4043" d="M0 0 L4 -4 H25.800 Q28.300 -4 28.300 -1.500 V1.500 Q28.300 4 25.800 4 H4 Z M3.400 0 L4.900 1.500 H20.800 V-1.500 H4.900 Z"/></g></svg>
<div style="left:712px;top:935px;width:373px;height:72px;background:#f1f3f4;border:1px solid #e5e7ea;border-radius:7px;"></div>
<span id="name4" class="t" style="left:734.5px;top:957.02px;font-size:28.8px;line-height:28.8px;color:#202124;letter-spacing:0.35px;font-weight:350;">カテゴリー</span>
<div style="left:1121px;top:935px;width:288px;height:72px;background:#f1f3f4;border:1px solid #e5e7ea;border-radius:7px;"></div>
<span id="type4" class="t" style="left:1143.3px;top:957.02px;font-size:28.8px;line-height:28.8px;color:#3c4043;letter-spacing:0.3px;">Text</span>
<svg style="left:1377.75px;top:967.0000000000001px;" width="17.5" height="9" viewBox="0 0 17.500 9"><path d="M0 0H17.500L8.750 9Z" fill="#80868b"/></svg>
<svg style="left:1461.1px;top:949.2px;" width="43.3" height="43.3" viewBox="0 0 24 24"><path fill="#757575" d="M19 5v14H5V5h14m0-2H5c-1.1 0-2 .9-2 2v14c0 1.1.9 2 2 2h14c1.1 0 2-.9 2-2V5c0-1.1-.9-2-2-2z"/></svg>
<svg style="left:1604.85px;top:949.2px;" width="43.3" height="43.3" viewBox="0 0 24 24"><path fill="#757575" d="M19 5v14H5V5h14m0-2H5c-1.1 0-2 .9-2 2v14c0 1.1.9 2 2 2h14c1.1 0 2-.9 2-2V5c0-1.1-.9-2-2-2z"/></svg>
<div style="left:1733px;top:935px;width:432px;height:72px;background:#f1f3f4;border:1px solid #e5e7ea;border-radius:7px;"></div>
<div style="left:1754px;top:967px;width:17.5px;height:2.7px;background:#202124;"></div>
<div style="left:1754px;top:973.6px;width:17.5px;height:2.7px;background:#202124;"></div>
<svg style="left:2117.25px;top:950.4000000000001px;" width="36" height="36" viewBox="0 0 24 24"><path fill="#80868b" d="M13 11.330L18 18H6l5-6.670V6h2m2.960-2H8.040c-.42 0-.65.48-.39.81L9 6.500v4.170L3.200 18.400c-.49.66-.02 1.600.8 1.600h16c.82 0 1.290-.94.8-1.600L15 10.670V6.500l1.350-1.690c.26-.33.030-.81-.39-.81z"/></svg>
<div style="left:635px;top:1021px;width:1566px;height:1px;background:#dfe1e5;"></div>
<span id="n5" class="t" style="left:639.5px;top:1034.99px;font-size:18.2px;line-height:18.2px;color:#9e9e9e;">6</span>
<svg style="left:670px;top:1057.2px;" width="25" height="25" viewBox="0 0 25 25"><g transform="translate(0.800 23.100) rotate(-45)"><path fill-rule="evenodd" fill="#3c4043" d="M0 0 L4 -4 H25.800 Q28.300 -4 28.300 -1.500 V1.500 Q28.300 4 25.800 4 H4 Z M3.400 0 L4.900 1.500 H20.800 V-1.500 H4.900 Z"/></g></svg>
<div style="left:712px;top:1036px;width:373px;height:72px;background:#f1f3f4;border:1px solid #e5e7ea;border-radius:7px;"></div>
<span id="name5" class="t" style="left:734.5px;top:1057.82px;font-size:28.8px;line-height:28.8px;color:#202124;letter-spacing:0.35px;font-weight:350;">詳細</span>
<div style="left:1121px;top:1036px;width:288px;height:72px;background:#f1f3f4;border:1px solid #e5e7ea;border-radius:7px;"></div>
<span id="type5" class="t" style="left:1143.3px;top:1057.82px;font-size:28.8px;line-height:28.8px;color:#3c4043;letter-spacing:0.3px;">Text</span>
<svg style="left:1377.75px;top:1067.8px;" width="17.5" height="9" viewBox="0 0 17.500 9"><path d="M0 0H17.500L8.750 9Z" fill="#80868b"/></svg>
<svg style="left:1461.1px;top:1050.0px;" width="43.3" height="43.3" viewBox="0 0 24 24"><path fill="#757575" d="M19 5v14H5V5h14m0-2H5c-1.1 0-2 .9-2 2v14c0 1.1.9 2 2 2h14c1.1 0 2-.9 2-2V5c0-1.1-.9-2-2-2z"/></svg>
<svg style="left:1604.85px;top:1050.0px;" width="43.3" height="43.3" viewBox="0 0 24 24"><path fill="#757575" d="M19 5v14H5V5h14m0-2H5c-1.1 0-2 .9-2 2v14c0 1.1.9 2 2 2h14c1.1 0 2-.9 2-2V5c0-1.1-.9-2-2-2z"/></svg>
<div style="left:1733px;top:1036px;width:432px;height:72px;background:#f1f3f4;border:1px solid #e5e7ea;border-radius:7px;"></div>
<div style="left:1754px;top:1068px;width:17.5px;height:2.7px;background:#202124;"></div>
<div style="left:1754px;top:1074.6px;width:17.5px;height:2.7px;background:#202124;"></div>
<svg style="left:2117.25px;top:1051.2px;" width="36" height="36" viewBox="0 0 24 24"><path fill="#80868b" d="M13 11.330L18 18H6l5-6.670V6h2m2.960-2H8.040c-.42 0-.65.48-.39.81L9 6.500v4.170L3.200 18.400c-.49.66-.02 1.600.8 1.600h16c.82 0 1.290-.94.8-1.600L15 10.670V6.500l1.350-1.690c.26-.33.030-.81-.39-.81z"/></svg>
<div style="left:635px;top:1122px;width:1566px;height:1px;background:#dfe1e5;"></div>
<span id="n6" class="t" style="left:639.5px;top:1135.79px;font-size:18.2px;line-height:18.2px;color:#9e9e9e;">7</span>
<svg style="left:670px;top:1158.0px;" width="25" height="25" viewBox="0 0 25 25"><g transform="translate(0.800 23.100) rotate(-45)"><path fill-rule="evenodd" fill="#3c4043" d="M0 0 L4 -4 H25.800 Q28.300 -4 28.300 -1.500 V1.500 Q28.300 4 25.800 4 H4 Z M3.400 0 L4.900 1.500 H20.800 V-1.500 H4.900 Z"/></g></svg>
<div style="left:712px;top:1137px;width:373px;height:72px;background:#f1f3f4;border:1px solid #e5e7ea;border-radius:7px;"></div>
<span id="name6" class="t" style="left:734.5px;top:1158.62px;font-size:28.8px;line-height:28.8px;color:#202124;letter-spacing:0.35px;font-weight:350;">参考</span>
<div style="left:1121px;top:1137px;width:288px;height:72px;background:#f1f3f4;border:1px solid #e5e7ea;border-radius:7px;"></div>
<span id="type6" class="t" style="left:1143.3px;top:1158.62px;font-size:28.8px;line-height:28.8px;color:#3c4043;letter-spacing:0.3px;">Url</span>
<svg style="left:1377.75px;top:1168.6px;" width="17.5" height="9" viewBox="0 0 17.500 9"><path d="M0 0H17.500L8.750 9Z" fill="#80868b"/></svg>
<svg style="left:1461.1px;top:1150.8px;" width="43.3" height="43.3" viewBox="0 0 24 24"><path fill="#757575" d="M19 5v14H5V5h14m0-2H5c-1.1 0-2 .9-2 2v14c0 1.1.9 2 2 2h14c1.1 0 2-.9 2-2V5c0-1.1-.9-2-2-2z"/></svg>
<svg style="left:1604.85px;top:1150.8px;" width="43.3" height="43.3" viewBox="0 0 24 24"><path fill="#757575" d="M19 5v14H5V5h14m0-2H5c-1.1 0-2 .9-2 2v14c0 1.1.9 2 2 2h14c1.1 0 2-.9 2-2V5c0-1.1-.9-2-2-2z"/></svg>
<div style="left:1733px;top:1137px;width:432px;height:72px;background:#f1f3f4;border:1px solid #e5e7ea;border-radius:7px;"></div>
<div style="left:1754px;top:1169px;width:17.5px;height:2.7px;background:#202124;"></div>
<div style="left:1754px;top:1175.6px;width:17.5px;height:2.7px;background:#202124;"></div>
<svg style="left:2117.25px;top:1152.0px;" width="36" height="36" viewBox="0 0 24 24"><path fill="#80868b" d="M13 11.330L18 18H6l5-6.670V6h2m2.960-2H8.040c-.42 0-.65.48-.39.81L9 6.500v4.170L3.200 18.400c-.49.66-.02 1.600.8 1.600h16c.82 0 1.290-.94.8-1.600L15 10.670V6.500l1.350-1.690c.26-.33.030-.81-.39-.81z"/></svg>
<svg style="left:2284px;top:779px;" width="11" height="19" viewBox="0 0 11 19"><path d="M0 0L11 9.500L0 19Z" fill="#757575"/></svg>
<div style="left:2304px;top:116px;width:720px;height:93px;background:#fff;"></div>
<div style="left:2304px;top:209px;width:720px;height:10px;background:linear-gradient(rgba(0,0,0,.13),rgba(0,0,0,.04) 55%,rgba(0,0,0,0));"></div>
<div style="left:2318px;top:126px;width:72px;height:72px;background:#e8effd;border-radius:50%;"></div>
<svg style="left:2343.75px;top:145.5px;" width="21.25" height="33" viewBox="0 0 21.25 33"><rect x="1.600" y="1.600" width="18.05" height="29.8" rx="2.800" fill="none" stroke="#3a72e0" stroke-width="3.200"/><path d="M2 5.700H19.25M2 27.3H19.25" stroke="#3a72e0" stroke-width="1.800"/></svg>
<svg style="left:2410px;top:150px;" width="33" height="24" viewBox="0 0 33 24"><rect x="1.600" y="1.600" width="29.800" height="20.800" rx="2.500" fill="none" stroke="#5f6368" stroke-width="3.200"/><path d="M5.600 2V22M27.400 2V22" stroke="#5f6368" stroke-width="1.800"/></svg>
<svg style="left:2482px;top:150px;" width="33" height="26" viewBox="0 0 33 26"><rect x="4.100" y="1.600" width="24.800" height="17.800" rx="2" fill="none" stroke="#5f6368" stroke-width="3.200"/><path d="M0 24.200H33" stroke="#5f6368" stroke-width="2.800"/></svg>
<div style="left:2762px;top:149px;width:66px;height:26px;background:#9db8f0;border-radius:13px;"></div>
<div style="left:2793px;top:144px;width:36px;height:36px;background:#3a72e0;border-radius:50%;box-shadow:0 2px 3px rgba(0,0,0,.3);"></div>
<span id="edit" class="t" style="left:2845px;top:146.14px;font-size:30.2px;line-height:30.2px;color:#3c4043;transform:scaleX(.935);transform-origin:0 0;">Edit</span>
<svg style="left:2900.4px;top:145.4px;" width="31.2" height="31.2" viewBox="0 0 24 24"><path fill="#5f6368" d="M11 7h2v2h-2zm0 4h2v6h-2zm1-9C6.48 2 2 6.48 2 12s4.48 10 10 10 10-4.48 10-10S17.52 2 12 2zm0 18c-4.41 0-8-3.59-8-8s3.59-8 8-8 8 3.59 8 8-3.59 8-8 8z"/></svg>
<svg style="left:2955.5px;top:144.2px;" width="36" height="36" viewBox="0 0 24 24"><path fill="#5f6368" d="M19 19H5V5h7V3H5c-1.11 0-2 .9-2 2v14c0 1.1.89 2 2 2h14c1.1 0 2-.9 2-2v-7h-2v7zM14 3v2h3.59l-9.83 9.830 1.41 1.410L19 6.410V10h2V3h-7z"/></svg>
<div class="ph" style="left:2341px;top:246px;width:646px;height:969px;background:#2d2d2d;border-radius:6px;box-shadow:0 2px 7px rgba(0,0,0,.45);overflow:hidden;"></div>
<div style="left:2890px;top:246px;width:97px;height:19px;background:#0f0f0f;border-top-right-radius:6px;"></div>
<div style="left:2893px;top:265px;width:94px;height:923px;background:#0e0e0e;"></div>
<div style="left:2893px;top:1103px;width:94px;height:85px;background:#111;"></div>
<div style="left:2890px;top:1188px;width:97px;height:27px;background:#111;border-bottom-right-radius:6px;"></div>
<svg style="left:0;top:0" width="3024" height="1222" viewBox="0 0 3024 1222" shape-rendering="crispEdges"><rect x="2373" y="283" width="20" height="20" fill="#c9c9d1"/><rect x="2393" y="303" width="20" height="20" fill="#82d6c9"/><rect x="2413" y="303" width="20" height="20" fill="#82d6c9"/><rect x="2433" y="303" width="20" height="20" fill="#5f9aaa"/><rect x="2493" y="303" width="20" height="20" fill="#757777"/><rect x="2533" y="303" width="20" height="20" fill="#8f9092"/><rect x="2613" y="303" width="20" height="20" fill="#ececee"/><rect x="2633" y="303" width="20" height="20" fill="#f0f0f2"/><rect x="2653" y="303" width="20" height="20" fill="#d2d2d4"/><rect x="2393" y="323" width="20" height="20" fill="#6f79a8"/><rect x="2413" y="323" width="20" height="20" fill="#fbffff"/><rect x="2433" y="323" width="20" height="20" fill="#83848f"/><rect x="2533" y="323" width="20" height="20" fill="#e4e4e6"/><rect x="2573" y="323" width="20" height="20" fill="#f0f0f2"/><rect x="2613" y="323" width="20" height="20" fill="#efeff1"/><rect x="2633" y="323" width="20" height="20" fill="#f0f0f2"/><rect x="2653" y="323" width="20" height="20" fill="#616161"/><rect x="2393" y="343" width="20" height="20" fill="#eeeeee"/><rect x="2433" y="343" width="20" height="20" fill="#cfcfcf"/><rect x="2373" y="443" width="20" height="20" fill="#515257"/><rect x="2393" y="443" width="20" height="20" fill="#92969b"/><rect x="2373" y="463" width="20" height="20" fill="#9ca1a6"/><rect x="2393" y="463" width="20" height="20" fill="#959aa3"/><rect x="2453" y="463" width="20" height="20" fill="#6b6c6e"/><rect x="2473" y="463" width="20" height="20" fill="#444545"/><rect x="2373" y="543" width="20" height="20" fill="#9ea3ad"/><rect x="2393" y="543" width="20" height="20" fill="#9ea3ad"/><rect x="2453" y="543" width="20" height="20" fill="#989899"/><rect x="2473" y="543" width="20" height="20" fill="#8e8f90"/><rect x="2493" y="543" width="20" height="20" fill="#363838"/><rect x="2513" y="543" width="20" height="20" fill="#cdced2"/><rect x="2533" y="543" width="20" height="20" fill="#303030"/><rect x="2373" y="623" width="20" height="20" fill="#414245"/><rect x="2393" y="623" width="20" height="20" fill="#66696d"/><rect x="2453" y="623" width="20" height="20" fill="#bfc0c3"/><rect x="2473" y="623" width="20" height="20" fill="#696a6c"/><rect x="2493" y="623" width="20" height="20" fill="#505050"/><rect x="2393" y="643" width="20" height="20" fill="#8b8e93"/><rect x="2373" y="703" width="20" height="20" fill="#9da2ac"/><rect x="2393" y="703" width="20" height="20" fill="#9da2ac"/><rect x="2373" y="723" width="20" height="20" fill="#9da2ac"/><rect x="2393" y="723" width="20" height="20" fill="#9da2ac"/><rect x="2453" y="723" width="20" height="20" fill="#6e6f6f"/><rect x="2473" y="723" width="20" height="20" fill="#6e6f6f"/><rect x="2493" y="723" width="20" height="20" fill="#6c6c6c"/><rect x="2513" y="723" width="20" height="20" fill="#6e6f70"/><rect x="2533" y="723" width="20" height="20" fill="#6e6f70"/><rect x="2393" y="1003" width="20" height="20" fill="#de92ab"/><rect x="2413" y="1003" width="20" height="20" fill="#e795b0"/><rect x="2373" y="1023" width="20" height="20" fill="#e795b0"/><rect x="2393" y="1023" width="20" height="20" fill="#e795b0"/><rect x="2413" y="1023" width="20" height="20" fill="#e795b0"/><rect x="2433" y="1023" width="20" height="20" fill="#e795b0"/><rect x="2373" y="1043" width="20" height="20" fill="#e795b0"/><rect x="2393" y="1043" width="20" height="20" fill="#e795b0"/><rect x="2413" y="1043" width="20" height="20" fill="#d88ca6"/><rect x="2433" y="1043" width="20" height="20" fill="#e795b0"/><rect x="2393" y="1063" width="20" height="20" fill="#e795b0"/><rect x="2413" y="1063" width="20" height="20" fill="#e795b0"/><rect x="2373" y="1083" width="20" height="20" fill="#4e4f51"/><rect x="2453" y="1083" width="20" height="20" fill="#77787a"/><rect x="2593" y="1083" width="20" height="20" fill="#4b4c4e"/><rect x="2753" y="1083" width="20" height="20" fill="#8a8b8e"/><rect x="2433" y="1103" width="20" height="20" fill="#616264"/><rect x="2473" y="1103" width="20" height="20" fill="#68696b"/><rect x="2533" y="1103" width="20" height="20" fill="#727377"/><rect x="2593" y="1103" width="20" height="20" fill="#88898d"/><rect x="2773" y="1103" width="20" height="20" fill="#77787a"/><rect x="2793" y="1143" width="20" height="20" fill="#322f31"/><rect x="2833" y="1143" width="20" height="20" fill="#c27d96"/><rect x="2753" y="1163" width="20" height="20" fill="#9a6477"/><rect x="2773" y="1163" width="20" height="20" fill="#dd90ab"/><rect x="2813" y="1163" width="20" height="20" fill="#4a343c"/><rect x="2833" y="1163" width="20" height="20" fill="#ac7186"/><rect x="2913" y="283" width="20" height="20" fill="#262626"/><rect x="2933" y="283" width="20" height="20" fill="#626262"/><rect x="2893" y="503" width="20" height="20" fill="#2a2a2a"/><rect x="2913" y="503" width="20" height="20" fill="#505153"/><rect x="2933" y="503" width="20" height="20" fill="#5a5b5c"/><rect x="2953" y="503" width="20" height="20" fill="#535355"/><rect x="2893" y="543" width="20" height="20" fill="#121515"/><rect x="2913" y="543" width="20" height="20" fill="#121515"/><rect x="2933" y="543" width="20" height="20" fill="#111414"/><rect x="2953" y="543" width="20" height="20" fill="#121515"/><rect x="2893" y="983" width="20" height="20" fill="#6a4352"/><rect x="2913" y="983" width="20" height="20" fill="#6d4554"/><rect x="2933" y="983" width="20" height="20" fill="#643e4c"/><rect x="2913" y="1003" width="20" height="20" fill="#6d4554"/><rect x="2933" y="1003" width="20" height="20" fill="#6f4655"/><rect x="2913" y="1023" width="20" height="20" fill="#6d4554"/><rect x="2933" y="1023" width="20" height="20" fill="#6f4655"/><rect x="2893" y="1043" width="20" height="20" fill="#6a4352"/><rect x="2913" y="1043" width="20" height="20" fill="#6d4554"/><rect x="2933" y="1043" width="20" height="20" fill="#6f4655"/><rect x="2893" y="1063" width="20" height="20" fill="#6a4352"/><rect x="2913" y="1063" width="20" height="20" fill="#573441"/><rect x="2345" y="343" width="8" height="20" fill="#555555"/><rect x="2345" y="363" width="8" height="20" fill="#8a8c8b"/><rect x="2345" y="383" width="8" height="20" fill="#b0b0b0"/><rect x="2345" y="403" width="8" height="20" fill="#c0c0c0"/><rect x="2345" y="423" width="8" height="20" fill="#bdbdbd"/><rect x="2345" y="443" width="8" height="20" fill="#c2c2c2"/><rect x="2345" y="463" width="8" height="20" fill="#adadad"/><rect x="2345" y="483" width="8" height="20" fill="#808080"/><rect x="2345" y="603" width="8" height="20" fill="#484848"/><rect x="2345" y="623" width="8" height="20" fill="#7a7a7a"/><rect x="2345" y="643" width="8" height="20" fill="#b4b5b4"/><rect x="2345" y="663" width="8" height="60" fill="#c6c6c6"/><rect x="2345" y="723" width="8" height="20" fill="#b8b8b8"/><rect x="2345" y="743" width="8" height="20" fill="#8c8c8c"/><rect x="2345" y="763" width="8" height="20" fill="#464848"/><rect x="2345" y="863" width="8" height="20" fill="#353535"/><rect x="2345" y="883" width="8" height="20" fill="#707070"/><rect x="2345" y="903" width="8" height="20" fill="#aaaaaa"/><rect x="2345" y="923" width="8" height="60" fill="#c4c4c4"/><rect x="2345" y="983" width="8" height="20" fill="#b5b5b5"/><rect x="2345" y="1003" width="8" height="20" fill="#9a9a9a"/><rect x="2345" y="1023" width="8" height="20" fill="#5c5c5c"/><rect x="2345" y="1143" width="8" height="20" fill="#616161"/><rect x="2345" y="1163" width="8" height="17" fill="#9c9c9c"/></svg>
<span id="p5" class="t" style="left:2973.3px;top:437.24px;font-size:23.7px;line-height:23.7px;color:#8e8e8e;">5</span>
<span id="p0" class="t" style="left:2973.3px;top:506.24px;font-size:23.7px;line-height:23.7px;color:#8e8e8e;">0</span>
<div style="left:2973px;top:347px;width:14px;height:1px;background:#2a2a2a;"></div>
<div style="left:2973px;top:416px;width:14px;height:1px;background:#2a2a2a;"></div>
<div style="left:2973px;top:485px;width:14px;height:1px;background:#2a2a2a;"></div>
<div style="left:2973px;top:553px;width:14px;height:1px;background:#2a2a2a;"></div>
<div style="left:2973px;top:443px;width:1px;height:20px;background:#444;"></div>
</div></body></html>
